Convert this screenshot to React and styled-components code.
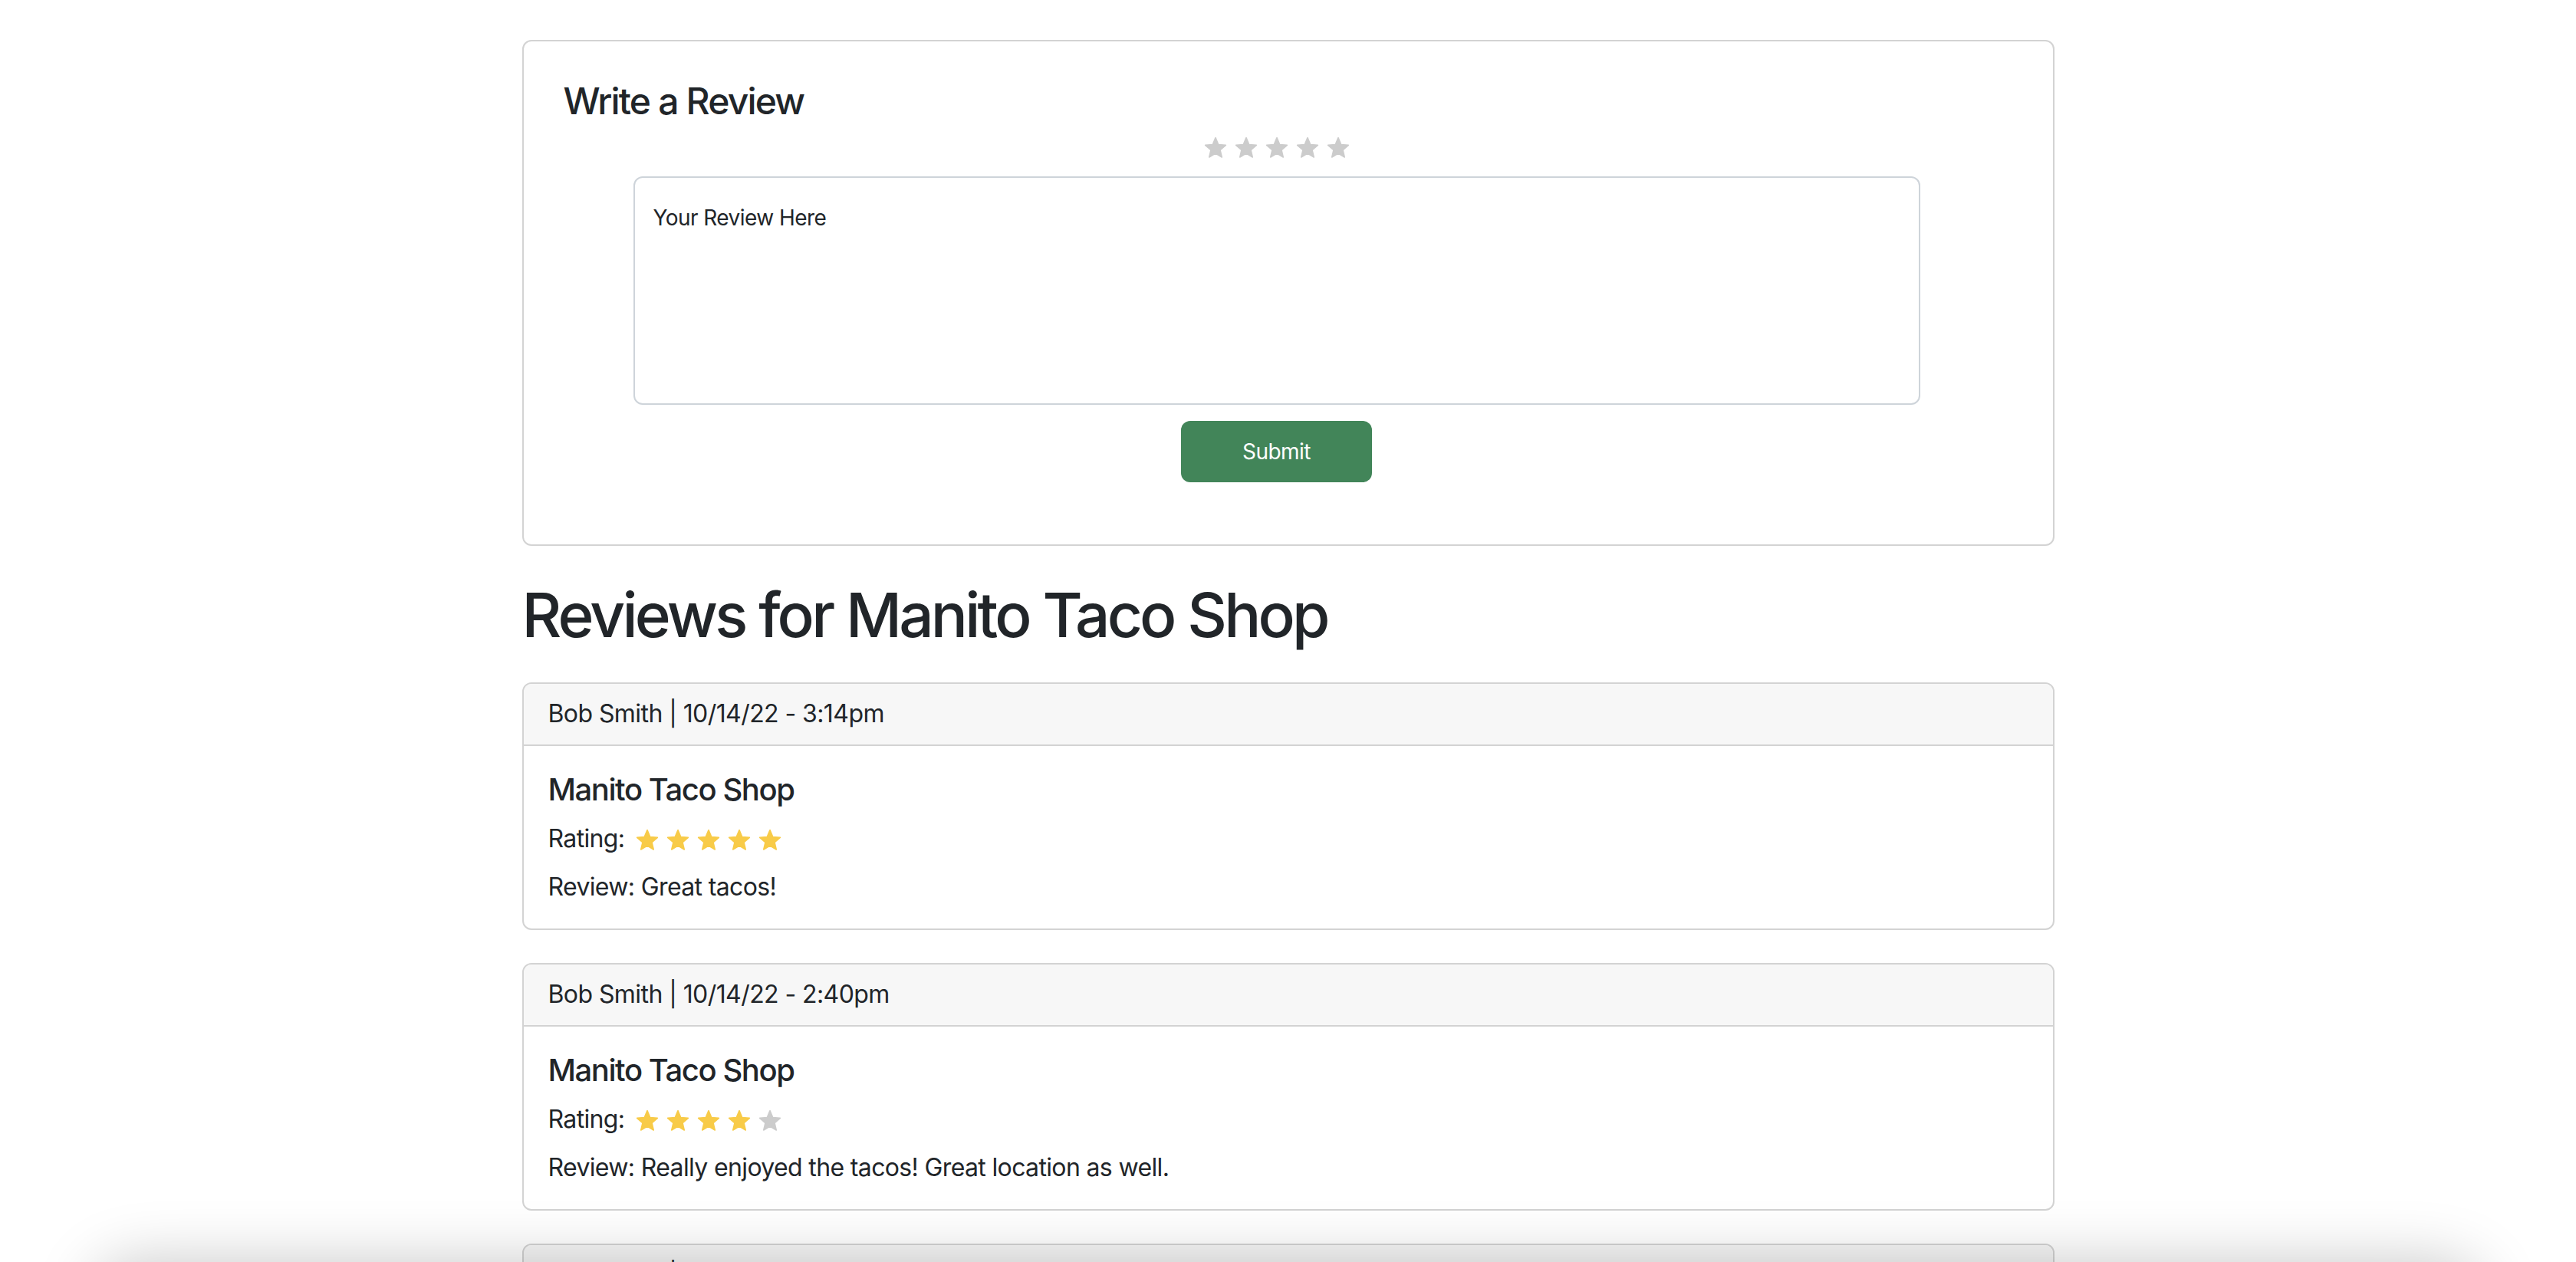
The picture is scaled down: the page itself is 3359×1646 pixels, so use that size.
import React from 'react';
import styled, { createGlobalStyle } from 'styled-components';

const reviews = [
 { id: 1, author: 'Bob Smith', date: '10/14/22 - 3:14pm', shop: 'Manito Taco Shop', rating: 5, text: 'Great tacos!' },
 { id: 2, author: 'Bob Smith', date: '10/14/22 - 2:40pm', shop: 'Manito Taco Shop', rating: 4, text: 'Really enjoyed the tacos! Great location as well.' },
 { id: 3, author: 'Bob Smith', date: '10/13/22 - 6:02pm', shop: 'Manito Taco Shop', rating: 3, text: 'Good food, long wait.' },
];

const Star = ({ filled }) => (
 <StarIcon $filled={filled} viewBox="0 0 24 24">
  <path d="M12 17.27L18.18 21l-1.64-7.03L22 9.24l-7.19-.61L12 2 9.19 8.63 2 9.24l5.46 4.73L5.82 21z" />
 </StarIcon>
);

const Stars = ({ value }) => (
 <>
  {[1, 2, 3, 4, 5].map((n) => (
   <Star key={n} filled={n <= value} />
  ))}
 </>
);

const App = () => {
 return (
  <>
   <GlobalStyle />
   <Styled_Page>
    {/* Review form */}
    <Styled_FormCard>
     <Styled_FormBody>
      <Styled_FormTitle>Write a Review</Styled_FormTitle>
      <Styled_ReviewForm onSubmit={(e) => e.preventDefault()}>
       <Styled_StarRow>
        <Stars value={0} />
       </Styled_StarRow>
       <Styled_ReviewInput placeholder="Your Review Here" />
       <Styled_SubmitButton type="submit">Submit</Styled_SubmitButton>
      </Styled_ReviewForm>
     </Styled_FormBody>
    </Styled_FormCard>
    {/* End review form */}

    <Styled_PageTitle>Reviews for Manito Taco Shop</Styled_PageTitle>

    {reviews.map((r) => (
     <Styled_ReviewCard key={r.id}>
      <Styled_CardHeader>
       {r.author} | {r.date}
      </Styled_CardHeader>
      <Styled_CardBody>
       <Styled_ShopName>{r.shop}</Styled_ShopName>
       <Styled_RatingRow>
        Rating:
        <Styled_RatingStars>
         <Stars value={r.rating} />
        </Styled_RatingStars>
       </Styled_RatingRow>
       <Styled_ReviewText>Review: {r.text}</Styled_ReviewText>
      </Styled_CardBody>
     </Styled_ReviewCard>
    ))}
   </Styled_Page>
   <Styled_BottomShade />
  </>
 );
};

const GlobalStyle = createGlobalStyle`
 * {
  box-sizing: border-box;
 }
 body {
  margin: 0;
  background: #fff;
  color: #212529;
  font-family: Inter, "Noto Sans", "Liberation Sans", sans-serif;
 }
`;

const Styled_Page = styled.main`
 width: 1998px;
 margin: 0 auto;
 padding: 52px 0 200px;
`;

const Styled_FormCard = styled.section`
 border: 2px solid #d3d3d3;
 border-radius: 12px;
 background: #fff;
`;

const Styled_FormBody = styled.div`
 padding: 49px 52px 81px;
`;

const Styled_FormTitle = styled.h4`
 margin: 0 0 16px;
 font-size: 48px;
 font-weight: 500;
 line-height: 1.2;
 letter-spacing: -0.038em;
`;

const Styled_ReviewForm = styled.form`
 display: flex;
 flex-direction: column;
 align-items: center;
 padding-right: 30px;
`;

const Styled_StarRow = styled.div`
 display: flex;
 gap: 8px;
 height: 32px;
 margin-bottom: 21px;
`;

const StarIcon = styled.svg`
 width: 32px;
 height: 32px;
 flex: none;
 fill: ${(p) => (p.$filled ? '#f8cb48' : '#cccccc')};
 stroke: ${(p) => (p.$filled ? '#f8cb48' : '#cccccc')};
 stroke-width: 1.2;
 stroke-linejoin: round;
`;

const Styled_ReviewInput = styled.textarea`
 width: 1678px;
 height: 298px;
 padding: 31px 24px;
 border: 2px solid #ced4da;
 border-radius: 12px;
 font-family: inherit;
 font-size: 28px;
 line-height: 42px;
 letter-spacing: -0.02em;
 color: #212529;
 resize: none;
 outline: none;

 &::placeholder {
  color: #212529;
  opacity: 1;
 }
`;

const Styled_SubmitButton = styled.button`
 margin-top: 21px;
 width: 249px;
 height: 80px;
 border: none;
 border-radius: 12px;
 background: #428559;
 color: #fff;
 font-family: inherit;
 font-size: 28px;
 line-height: 42px;
 letter-spacing: -0.02em;
 cursor: pointer;
`;

const Styled_PageTitle = styled.h1`
 margin: 42px 0 40px;
 font-size: 80px;
 font-weight: 500;
 line-height: 1.2;
 letter-spacing: -0.047em;
`;

const Styled_ReviewCard = styled.article`
 border: 2px solid #d3d3d3;
 border-radius: 12px;
 overflow: hidden;
 margin-bottom: 43px;
 background: #fff;
`;

const Styled_CardHeader = styled.header`
 padding: 15px 32px 16px;
 background: #f7f7f7;
 border-bottom: 2px solid #d3d3d3;
 font-size: 32px;
 line-height: 48px;
 letter-spacing: -0.018em;
`;

const Styled_CardBody = styled.div`
 padding: 33px 32px 30px;
 font-size: 32px;
 line-height: 48px;
 letter-spacing: -0.02em;
`;

const Styled_ShopName = styled.h5`
 margin: 0 0 16px;
 font-size: 40px;
 font-weight: 500;
 line-height: 48px;
 letter-spacing: -0.036em;
`;

const Styled_RatingRow = styled.div`
 display: flex;
 align-items: center;
 margin-bottom: 15px;
`;

const Styled_RatingStars = styled.span`
 display: flex;
 gap: 8px;
 margin: 5px 0 0 14px;
`;

const Styled_ReviewText = styled.p`
 margin: 0;
`;

const Styled_BottomShade = styled.div`
 position: fixed;
 left: 120px;
 right: 120px;
 top: 100%;
 height: 120px;
 border-radius: 60px;
 box-shadow: 0 0 80px 0 rgba(0, 0, 0, 0.22);
 pointer-events: none;
 z-index: 10;
`;

export default App;
